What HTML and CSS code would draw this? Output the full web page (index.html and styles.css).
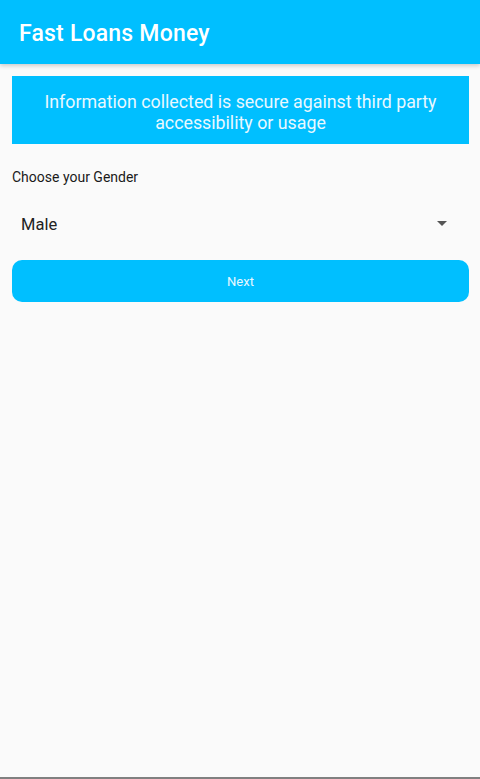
FILE: index.html
```html
<!DOCTYPE html>
<html lang="en">
<head>
    <meta charset="UTF-8">
    <meta name="viewport" content="width=device-width, initial-scale=1.0">
    <title>Fast Loans Money</title>
    <link rel="stylesheet" href="styles.css">
</head>
<body>

<div class="app">
    <header class="app-bar">
        <h1>Fast Loans Money</h1>
    </header>

    <main class="content">
        <div class="notice">
            Information collected is secure against third party accessibility or usage
        </div>

        <label class="field-label" for="gender">Choose your Gender</label>
        <div class="select">
            <span class="select-value" id="gender">Male</span>
            <span class="select-arrow"></span>
        </div>

        <button class="next-button" type="button">Next</button>
    </main>

    <div class="bottom-line"></div>
</div>

</body>
</html>
```

FILE: styles.css
```css
* {
    box-sizing: border-box;
}

html, body {
    height: 100%;
}

body {
    font-family: Roboto, 'Liberation Sans', sans-serif;
    margin: 0;
    background-color: #fafafa;
    color: #222;
}

.app {
    min-height: 100%;
    display: flex;
    flex-direction: column;
}

.app-bar {
    height: 64px;
    background-color: #00bfff;
    box-shadow: 0 2px 4px rgba(0, 0, 0, 0.18);
    display: flex;
    align-items: center;
    padding: 0 19px 0 19px;
}

.app-bar h1 {
    margin: 0 0 -2px;
    color: #fff;
    font-size: 23px;
    font-weight: 500;
    letter-spacing: 0.2px;
}

.content {
    flex: 1;
    padding: 12px 11px 0 12px;
    display: flex;
    flex-direction: column;
}

.notice {
    background-color: #00bfff;
    color: #e8f8ff;
    text-align: center;
    font-size: 17.8px;
    line-height: 21px;
    padding: 15px 12px 11px;
    min-height: 68px;
}

.field-label {
    margin-top: 25px;
    font-size: 14px;
    color: #1a1a1a;
}

.select {
    display: flex;
    align-items: center;
    justify-content: space-between;
    height: 44px;
    margin-top: 17px;
    padding: 0 22px 0 9px;
}

.select-value {
    font-size: 16.5px;
    color: #222;
}

.select-arrow {
    width: 0;
    height: 0;
    margin-bottom: 2px;
    border-left: 5px solid transparent;
    border-right: 5px solid transparent;
    border-top: 5px solid #555;
}

.next-button {
    margin-top: 14px;
    height: 42px;
    border: none;
    border-radius: 10px;
    background-color: #00bfff;
    color: #e8f8ff;
    font-family: inherit;
    font-size: 13px;
    padding-top: 2px;
    cursor: pointer;
}

.bottom-line {
    height: 2px;
    background-color: #808080;
}
```
